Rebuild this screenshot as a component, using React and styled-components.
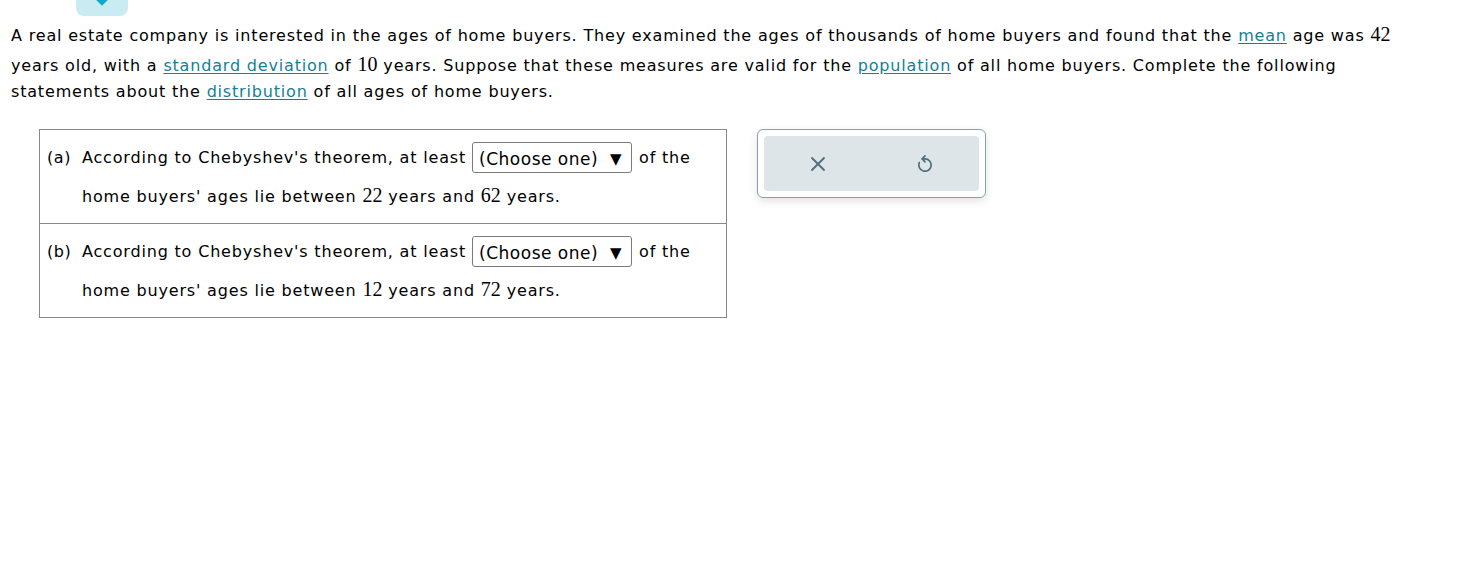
import React from 'react'
import styled, { createGlobalStyle } from 'styled-components'

const GlobalStyle = createGlobalStyle`
  body {
    margin: 0;
    background: #ffffff;
    font-family: "DejaVu Sans", Verdana, sans-serif;
    font-size: 16px;
    letter-spacing: 0.82px;
    color: #000;
  }
`

export default function App() {
  return (
    <Page>
      <GlobalStyle />
      <TabRow>
        <Tab>
          <svg width="16" height="8" viewBox="0 0 16 8">
            <path d="M2 -3 L8 3 L14 -3" fill="none" stroke="#12a9c6" strokeWidth="4" />
          </svg>
        </Tab>
      </TabRow>
      <Intro>
        A real estate company is interested in the ages of home buyers. They examined the ages
        of thousands of home buyers and found that the <Term>mean</Term> age was <Num>42</Num>{' '}
        years old, with a <Term>standard deviation</Term> of <Num>10</Num> years. Suppose that
        these measures are valid for the <Term>population</Term> of all home buyers. Complete the
        following statements about the <Term>distribution</Term> of all ages of home buyers.
      </Intro>
      <Work>
        <Table>
          <Part label="(a)" low="22" high="62" />
          <Part label="(b)" low="12" high="72" />
        </Table>
        <Tools>
          <ToolTray>
            <ToolButton aria-label="clear">
              <svg width="16" height="16" viewBox="0 0 16 16">
                <path d="M2 2 L14 14 M14 2 L2 14" stroke="#4b6f7b" strokeWidth="1.8" strokeLinecap="round" />
              </svg>
            </ToolButton>
            <ToolButton aria-label="reset">
              <svg width="16" height="19" viewBox="0 0 16 19" fill="none" stroke="#4b6f7b" strokeWidth="1.7" strokeLinecap="round" strokeLinejoin="round">
                <path d="M8 1.8 L5.2 4.8 L8 7.8" />
                <path d="M5.2 4.8 H8 A6.2 6.2 0 1 1 2.3 8.5" />
              </svg>
            </ToolButton>
          </ToolTray>
        </Tools>
      </Work>
    </Page>
  )
}

function Part({ label, low, high }) {
  return (
    <Row>
      <Label>{label}</Label>
      <Body>
        <FirstLine>
          According to Chebyshev's theorem, at least
          <Choose>
            <span>(Choose one)</span>
            <Arrow>▼</Arrow>
          </Choose>
          of the
        </FirstLine>
        <SecondLine>
          home buyers' ages lie between <Num>{low}</Num> years and <Num>{high}</Num> years.
        </SecondLine>
      </Body>
    </Row>
  )
}

const Page = styled.div`
  width: 1462px;
  min-height: 566px;
`

const TabRow = styled.div`
  height: 16px;
  padding-left: 76px;
`

const Tab = styled.div`
  width: 52px;
  height: 16px;
  background: #c9ecf3;
  border-radius: 0 0 8px 8px;
  display: flex;
  justify-content: center;
  align-items: flex-start;
  svg {
    display: block;
  }
`

const Intro = styled.p`
  margin: 3px 0 0;
  padding: 0 40px 0 11px;
  line-height: 25px;
`

const Term = styled.a`
  color: #127f98;
  text-decoration: underline;
  text-underline-offset: 2px;
  cursor: pointer;
`

const Num = styled.span`
  font-family: "Liberation Serif", "Times New Roman", serif;
  font-size: 20px;
  letter-spacing: 0;
  line-height: 1.5;
`

const Work = styled.div`
  display: flex;
  align-items: flex-start;
  gap: 30px;
  margin-top: 25px;
  padding-left: 39px;
`

const Table = styled.div`
  width: 686px;
  border: 1px solid #888;
`

const Row = styled.div`
  display: flex;
  padding: 11px 0 19px 7px;
  & + & {
    border-top: 1px solid #888;
  }
`

const Label = styled.div`
  width: 35px;
  line-height: 33px;
  letter-spacing: 0.6px;
`

const Body = styled.div`
  display: flex;
  flex-direction: column;
`

const FirstLine = styled.div`
  display: flex;
  align-items: center;
  height: 33px;
  white-space: nowrap;
`

const SecondLine = styled.div`
  height: 24px;
  margin-top: 6px;
  line-height: 24px;
  white-space: nowrap;
`

const Choose = styled.div`
  display: flex;
  align-items: center;
  justify-content: space-between;
  box-sizing: border-box;
  width: 160px;
  height: 31px;
  margin: 0 7px 0 6px;
  padding: 2px 9px 0 6px;
  border: 1px solid #7a7a7a;
  border-radius: 3px;
  font-size: 17px;
  letter-spacing: 0.5px;
  background: #fff;
`

const Arrow = styled.span`
  font-size: 15px;
`

const Tools = styled.div`
  box-sizing: border-box;
  width: 229px;
  height: 69px;
  padding: 6px;
  border: 1px solid #86a2ab;
  border-radius: 6px;
  background: #fff;
  box-shadow: 0 3px 8px rgba(0, 0, 0, 0.12);
`

const ToolTray = styled.div`
  display: grid;
  grid-template-columns: 1fr 1fr;
  height: 100%;
  background: #dee5e8;
  border-radius: 4px;
`

const ToolButton = styled.button`
  display: flex;
  align-items: center;
  justify-content: center;
  border: none;
  background: transparent;
  padding: 0;
  cursor: pointer;
`
